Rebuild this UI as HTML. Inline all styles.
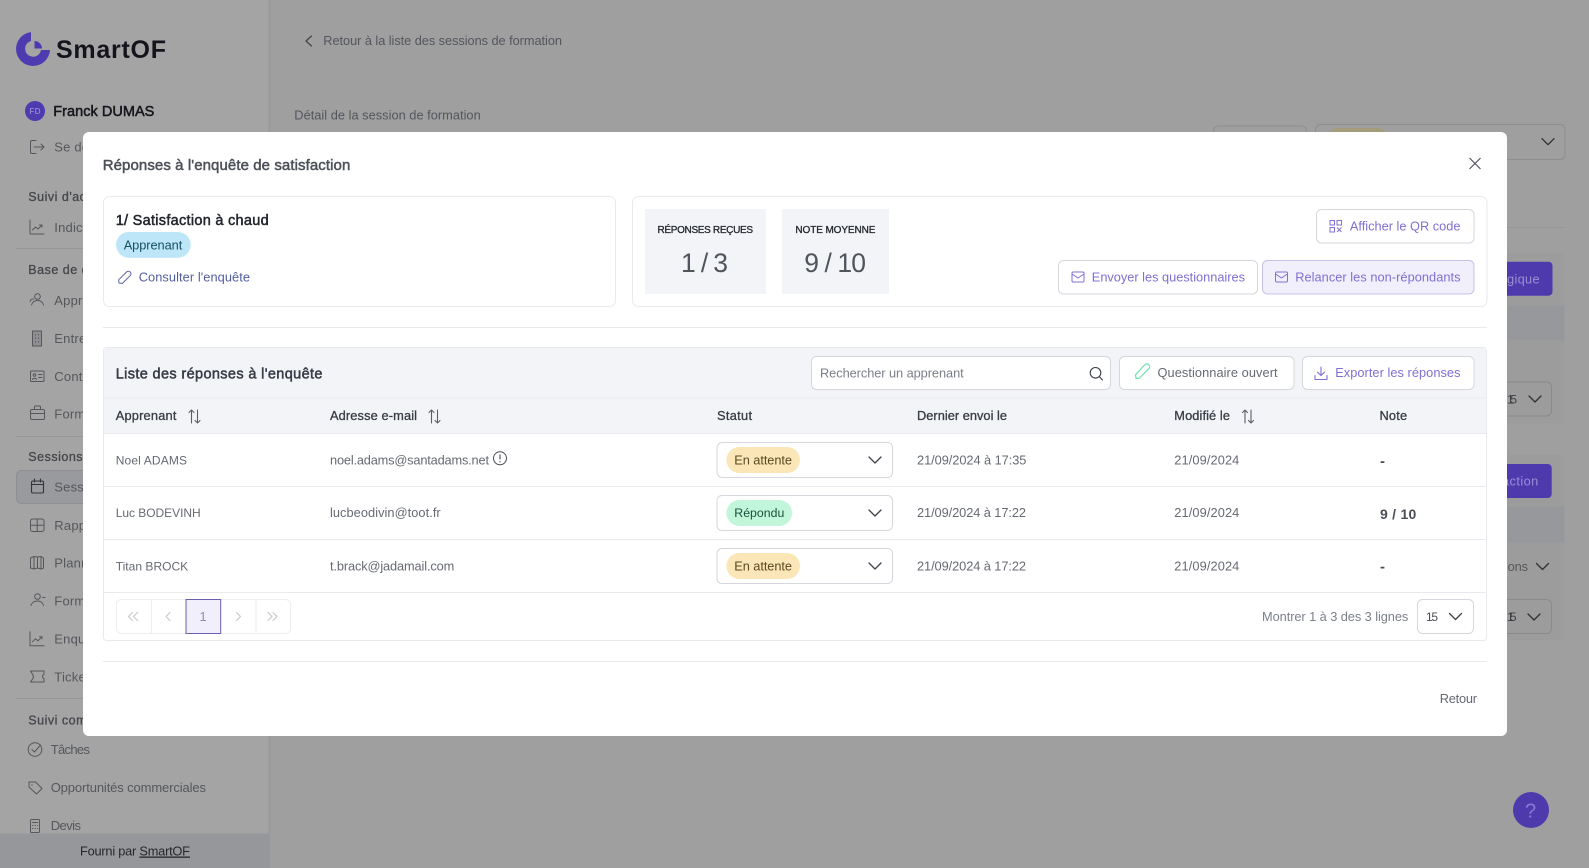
<!DOCTYPE html>
<html lang="fr"><head><meta charset="utf-8"><title>SmartOF</title>
<style>
html,body{margin:0;padding:0;background:#9f9f9f;overflow:hidden}
svg{display:block}
text{font-family:"Liberation Sans",sans-serif;font-size:12.8px;white-space:pre}
.m{stroke-width:.3px;paint-order:stroke}
.s{stroke-width:.5px;paint-order:stroke}
.sb{font-size:13px;letter-spacing:.2px;fill:#55575c}
.sh{font-size:12.5px;letter-spacing:.5px;fill:#45474c;stroke:#45474c;stroke-width:.3px}
.ic{fill:none;stroke:#55575c;stroke-width:1;stroke-linecap:round;stroke-linejoin:round}
.b{fill:#fff;stroke:#d5d7dc;stroke-width:1}
.l{stroke:#e8eaed;stroke-width:1}
.t{fill:#666a73}
.cap{font-size:12px}
.p{fill:#7f70d2}
</style></head><body>
<svg width="1589" height="868" viewBox="0 0 1589 868" xmlns="http://www.w3.org/2000/svg">
<defs>
<path id="chev" d="M-6 -3L0 3L6 -3" fill="none" stroke="#3f4248" stroke-width="1.300" stroke-linecap="round" stroke-linejoin="round"/>
<path id="chevd" d="M-6 -3L0 3L6 -3" fill="none" stroke="#2f3034" stroke-width="1.300" stroke-linecap="round" stroke-linejoin="round"/>
<g id="mail" fill="none" stroke="#7f70d2" stroke-width="1" stroke-linejoin="round"><rect x="0.5" y="0.5" width="12" height="10" rx="1.200"/><path d="M0.5 2.500L6.500 6.500L12.500 2.500"/></g>
<g id="sort" fill="none" stroke="#5b6068" stroke-width="1.100" stroke-linecap="round" stroke-linejoin="round"><path d="M4 14V1M1.500 3.500L4 1L6.500 3.500"/><path d="M10 1V14M7.500 11.500L10 14L12.500 11.500"/></g>
<g id="chart" class="ic"><path d="M30 -7V7H44"/><path d="M32.500 3L35.500 0L38 2L42 -2M39.500 -2H42V0"/></g>
</defs>

<!-- background -->
<rect width="1589" height="868" fill="#9f9f9f"/>
<rect width="269" height="868" fill="#a4a4a4"/>
<rect x="268.500" width="1.500" height="868" fill="#999"/>

<!-- logo -->
<path d="M31 32.100A17 17 0 1 0 50 50L41 50A8 8 0 1 1 31 41Z" fill="#4f3bb0"/>
<path d="M34.500 41A7.500 7.500 0 0 1 42 48.500L34.500 48.500Z" fill="#4f3bb0"/>
<text x="56" y="58" textLength="110" font-weight="700" style="font-size:25px" fill="#14141c">SmartOF</text>

<!-- user -->
<circle cx="35" cy="111" r="10" fill="#4f3bb0"/>
<text x="29.500" y="114" textLength="11" style="font-size:8px" fill="#a79be0">FD</text>
<text x="53.300" y="116" textLength="101" class="s" style="font-size:14.500px" fill="#15151d" stroke="#15151d">Franck DUMAS</text>

<!-- sidebar nav -->
<path class="ic" d="M36 140.500H32A1.500 1.500 0 0 0 30.500 142V152A1.500 1.500 0 0 0 32 153.500H36M34 147H44M41 144L44 147L41 150"/>
<text x="54.300" y="151.500" class="sb">Se déconnecter</text>
<text x="28.300" y="201" class="sh">Suivi d'activité</text>
<use href="#chart" y="227"/>
<text x="54.300" y="232" class="sb">Indicateurs</text>
<line x1="16" x2="260" y1="248.500" y2="248.500" stroke="#979797"/>
<text x="28.300" y="274" class="sh">Base de contacts</text>
<g class="ic"><circle cx="37.500" cy="296.500" r="2.800"/><path d="M31.500 305C32.500 301.500 34.500 300.500 37.500 300.500S42.500 301.500 43.500 305M30 301.500C30.500 299.500 32 299 33.500 299"/></g>
<text x="54.300" y="305" class="sb">Apprenants</text>
<g class="ic"><rect x="32.500" y="331" width="9" height="15" fill="#8f8f8f"/><path d="M35.500 334.500V335M38.500 334.500V335M35.500 338V338.500M38.500 338V338.500M35.500 341.500V342M38.500 341.500V342"/></g>
<text x="54.300" y="343" class="sb">Entreprises</text>
<g class="ic"><rect x="30.500" y="371" width="13.500" height="10.500" rx="1"/><circle cx="34.500" cy="375" r="1.300"/><path d="M32.500 379.500C33 377.800 36 377.800 36.500 379.500M38.500 374.500H42M38.500 377.500H42"/></g>
<text x="54.300" y="381" class="sb">Contacts</text>
<g class="ic"><rect x="30.500" y="409.500" width="14" height="10" rx="1.500"/><path d="M34.500 409.500V407A1 1 0 0 1 35.500 406H39.500A1 1 0 0 1 40.500 407V409.500M30.500 413.500H44.500"/></g>
<text x="54.300" y="418.500" class="sb">Formateurs</text>
<line x1="16" x2="260" y1="436.500" y2="436.500" stroke="#979797"/>
<text x="28.300" y="461" class="sh">Sessions</text>
<rect x="16.500" y="470.500" width="240" height="33" rx="5" fill="#999a9e" stroke="#8d8f93"/>
<g fill="none" stroke="#33353a" stroke-width="1.100" stroke-linecap="round"><rect x="31.500" y="481" width="12" height="12" rx="1.500"/><path d="M31.500 484.500H43.500M34.500 479V482M40.500 479V482"/></g>
<text x="54.300" y="491.500" class="sb">Sessions</text>
<g class="ic"><rect x="30.500" y="519" width="13.500" height="12.500" rx="2"/><path d="M37.250 519V531.500M30.500 525.200H44"/></g>
<text x="54.300" y="530" class="sb">Rapports</text>
<path class="ic" d="M30.500 558L34 556.500L37.500 557L41 556.500L43.500 558V568L41 569L37.500 568L34 569L30.500 568ZM34 556.500V569M37.500 557V568M41 556.500V569"/>
<text x="54.300" y="567.500" class="sb">Planning</text>
<g class="ic"><circle cx="37.500" cy="596.500" r="2.800"/><path d="M31 605.500C32 602 34.500 601 37.500 601S42.500 602 43.500 605.500M42.500 597.500H45"/></g>
<text x="54.300" y="605.500" class="sb">Formateurs</text>
<use href="#chart" y="638.800"/>
<text x="54.300" y="643.500" class="sb">Enquêtes</text>
<path class="ic" d="M30.500 671H44V674.500C42 675 42 678 44 678.500V682H30.500L33 678.500C33.500 677 33.500 676 33 675Z"/>
<text x="54.300" y="681.500" class="sb">Tickets</text>
<line x1="16" x2="260" y1="698.500" y2="698.500" stroke="#979797"/>
<text x="28.300" y="724.500" class="sh">Suivi commercial</text>
<g class="ic"><circle cx="35" cy="749.500" r="6.800"/><path d="M31.800 749.500L34.500 752L40.500 745"/></g>
<text x="50.700" y="754" textLength="39.500" class="sb">Tâches</text>
<path class="ic" d="M29 782H35.500L42 788.500L36.500 794L29 787Z"/>
<circle cx="32" cy="785" r=".7" fill="#55575c"/>
<text x="50.700" y="792" textLength="155.500" class="sb">Opportunités commerciales</text>
<g class="ic"><rect x="30.500" y="819.500" width="9" height="13" rx="1"/><path d="M32.500 822.500H37.500M32.500 825.500H33M35 825.500H35.500M37.500 825.500H37.600M32.500 828.500H33M35 828.500H35.500M37.500 828.500H37.600"/></g>
<text x="50.700" y="830" textLength="30.500" class="sb">Devis</text>
<rect y="833.500" width="270" height="34.500" fill="#95979b"/>
<text x="80" y="855.500" textLength="110" fill="#25262a">Fourni par <tspan text-decoration="underline">SmartOF</tspan></text>

<!-- main behind modal -->
<path d="M311.500 36L306 41L311.500 46" fill="none" stroke="#3f4248" stroke-width="1.200" stroke-linecap="round" stroke-linejoin="round"/>
<text x="323.300" y="45" textLength="238.700" fill="#53565d">Retour à la liste des sessions de formation</text>
<text x="294.300" y="119.500" textLength="186.400" fill="#53565d">Détail de la session de formation</text>
<rect x="1213.500" y="126" width="93" height="20" rx="5" fill="none" stroke="#8c8d90"/>
<rect x="1315.500" y="124.500" width="249.500" height="35" rx="5" fill="none" stroke="#8c8d90"/>
<rect x="1328" y="128" width="59" height="20" rx="10" fill="#a59c7c"/>
<use href="#chevd" x="1548" y="141.700"/>
<line x1="1500" x2="1565" y1="227.500" y2="227.500" stroke="#959597"/>

<rect x="1500" y="253.500" width="64.500" height="170" fill="#9c9c9d"/>
<rect x="1500" y="305.500" width="64.500" height="35" fill="#97989c"/>
<rect x="1500" y="261.700" width="52.500" height="34" rx="4" fill="#4e3aac"/>
<text x="1507" y="283.500" textLength="32.600" fill="#9a8fd6">gique</text>
<rect x="1500.500" y="382" width="51" height="34" rx="5" fill="none" stroke="#88898c"/>
<text x="1507" y="403.500" textLength="10" style="font-size:12px" fill="#3d3f44">15</text>
<use href="#chevd" x="1535" y="399"/>

<rect x="1500" y="455" width="64.500" height="185" fill="#9c9c9d"/>
<rect x="1500" y="506.700" width="64.500" height="36" fill="#97989c"/>
<rect x="1500" y="464" width="51.700" height="34" rx="4" fill="#4e3aac"/>
<text x="1502" y="485.500" textLength="36.300" fill="#9a8fd6">action</text>
<text x="1505" y="571" textLength="23" fill="#55575c">ions</text>
<use href="#chevd" x="1542.500" y="566.500"/>
<rect x="1500.500" y="599.500" width="51" height="34" rx="5" fill="none" stroke="#88898c"/>
<text x="1507" y="621" textLength="9.500" style="font-size:12px" fill="#3d3f44">15</text>
<use href="#chevd" x="1534" y="617"/>

<circle cx="1531" cy="810" r="18" fill="#4e3aac"/>
<text x="1525" y="817.500" textLength="11" style="font-size:20px" fill="#8a7bd4">?</text>

<!-- modal -->
<rect x="83" y="132" width="1424" height="604" rx="6" fill="#fff"/>
<text x="102.700" y="170" textLength="247.600" class="s" style="font-size:15px" fill="#4b5058" stroke="#4b5058">Réponses à l'enquête de satisfaction</text>
<path d="M1469.800 158.300L1480.200 168.700M1480.200 158.300L1469.800 168.700" stroke="#55585f" stroke-width="1.100" fill="none" stroke-linecap="round"/>

<!-- card 1 -->
<rect x="103.500" y="196.500" width="512" height="110" rx="6" fill="#fff" stroke="#e8eaed"/>
<text x="115.700" y="225" textLength="153" class="s" style="font-size:14.500px" fill="#23262d" stroke="#23262d">1/ Satisfaction à chaud</text>
<rect x="116" y="232" width="74.700" height="25.700" rx="12.800" fill="#bde7f9"/>
<text x="123.700" y="249.500" textLength="58.600" fill="#14505f">Apprenant</text>
<path d="M119 283L118.700 279.800L126.500 272A2 2 0 0 1 130.200 275.700L122.300 283.500Z" fill="none" stroke="#5c67a5" stroke-width="1" stroke-linejoin="round"/>
<text x="138.700" y="281.300" textLength="111.300" fill="#535e9e">Consulter l'enquête</text>

<!-- card 2 -->
<rect x="632.500" y="196.500" width="854.500" height="110" rx="6" fill="#fff" stroke="#e8eaed"/>
<rect x="645" y="209" width="121" height="85" fill="#f2f4f7"/>
<rect x="782" y="209" width="107" height="85" fill="#f2f4f7"/>
<text x="657.500" y="233" textLength="95.500" class="m" style="font-size:10px" fill="#23262d" stroke="#23262d">RÉPONSES REÇUES</text>
<text x="795.400" y="233" textLength="80" class="m" style="font-size:10px" fill="#23262d" stroke="#23262d">NOTE MOYENNE</text>
<text x="681" y="272" textLength="47" style="font-size:26.500px" fill="#50545c">1 / 3</text>
<text x="804.300" y="272" textLength="61.700" style="font-size:26.500px" fill="#50545c">9 / 10</text>

<rect class="b" x="1316.500" y="209.500" width="157.500" height="33.500" rx="5"/>
<g fill="none" stroke="#7f70d2" stroke-width="1"><rect x="1330" y="220.500" width="4.500" height="4.500"/><rect x="1337" y="220.500" width="4.500" height="4.500"/><rect x="1330" y="227.500" width="4.500" height="4.500"/><path d="M1337 227.500L1341.500 232M1341.500 227.500L1337 232"/></g>
<text x="1349.900" y="230.500" textLength="110.600" class="p">Afficher le QR code</text>

<rect class="b" x="1058.500" y="260.500" width="199" height="33.500" rx="5"/>
<use href="#mail" x="1071.500" y="271.500"/>
<text x="1091.800" y="281.300" textLength="153.200" class="p">Envoyer les questionnaires</text>

<rect x="1262.500" y="260.500" width="211.500" height="33.500" rx="5" fill="#f1effc" stroke="#c6c1e6"/>
<use href="#mail" x="1275" y="271.500"/>
<text x="1295.200" y="281.300" textLength="165.300" class="p">Relancer les non-répondants</text>

<line class="l" x1="103" x2="1487" y1="327.500" y2="327.500"/>

<!-- table -->
<rect x="103.500" y="347.500" width="1383" height="293" rx="3" fill="#fff" stroke="#e8eaed"/>
<rect x="104" y="348" width="1382" height="86" fill="#f2f4f7"/>
<line x1="104" x2="1486" y1="398" y2="398" stroke="#e9ebef"/>
<text x="115.700" y="378.500" textLength="206.800" class="s" style="font-size:14.500px" fill="#373b45" stroke="#373b45">Liste des réponses à l'enquête</text>

<rect class="b" x="811.500" y="356.500" width="299" height="33" rx="5"/>
<text x="820" y="377.300" textLength="143.700" fill="#7b7f88">Rechercher un apprenant</text>
<g fill="none" stroke="#3c3f46" stroke-width="1.100" stroke-linecap="round"><circle cx="1095.500" cy="372.800" r="5.300"/><path d="M1099.500 376.800L1102.500 380"/></g>

<rect class="b" x="1119.500" y="356.500" width="174.500" height="33" rx="5"/>
<path d="M1136 378.500L1135.500 374.800L1144.500 365A2.200 2.200 0 0 1 1149 368.500L1139.500 378Z" fill="none" stroke="#6fe3b0" stroke-width="1.200" stroke-linejoin="round"/>
<text x="1157.500" y="377.200" textLength="120.100" fill="#666a73">Questionnaire ouvert</text>

<rect class="b" x="1302.500" y="356.500" width="171.500" height="33" rx="5"/>
<g fill="none" stroke="#7f70d2" stroke-width="1.100" stroke-linecap="round" stroke-linejoin="round"><path d="M1321 367V375.500M1317.500 372.200L1321 375.500L1324.500 372.200M1315 375.500V379.500H1327V375.500"/></g>
<text x="1335.200" y="377.200" textLength="125.300" class="p">Exporter les réponses</text>

<g class="m" style="font-size:12px" fill="#373b45" stroke="#373b45">
<text x="115.700" y="420" textLength="60.700">Apprenant</text>
<text x="330" y="420" textLength="87">Adresse e-mail</text>
<text x="717" y="420" textLength="35">Statut</text>
<text x="917" y="420" textLength="90">Dernier envoi le</text>
<text x="1174.300" y="420" textLength="55.700">Modifié le</text>
<text x="1379.500" y="420" textLength="27.600">Note</text>
</g>
<use href="#sort" x="187.500" y="409"/>
<use href="#sort" x="427.500" y="409"/>
<use href="#sort" x="1241" y="409"/>

<line class="l" x1="104" x2="1486" y1="433.500" y2="433.500"/>
<line class="l" x1="104" x2="1486" y1="486.500" y2="486.500"/>
<line class="l" x1="104" x2="1486" y1="539.500" y2="539.500"/>
<line class="l" x1="104" x2="1486" y1="592.500" y2="592.500"/>

<!-- row 1 -->
<text x="115.700" y="464.500" textLength="71.300" class="t cap">Noel ADAMS</text>
<text x="330" y="464.500" textLength="159" class="t">noel.adams@santadams.net</text>
<circle cx="500" cy="458.300" r="6.500" fill="none" stroke="#4b4e55" stroke-width="1"/>
<path d="M500 454.800V459M500 461.300V461.900" stroke="#4b4e55" stroke-width="1.100" stroke-linecap="round"/>
<rect class="b" x="717" y="442.500" width="175.500" height="35" rx="5"/>
<rect x="726.400" y="447" width="73.600" height="26" rx="13" fill="#fbe6b7"/>
<text x="734.300" y="464.500" textLength="57.700" fill="#5a4a20">En attente</text>
<use href="#chev" x="875" y="460"/>
<text x="917" y="464.500" textLength="109.400" class="t">21/09/2024 à 17:35</text>
<text x="1174.300" y="464.500" textLength="65" class="t">21/09/2024</text>
<text x="1380" y="466" textLength="5.500" font-weight="700" style="font-size:15px" fill="#4b4e55">-</text>

<!-- row 2 -->
<text x="115.700" y="517.200" textLength="85" class="t cap">Luc BODEVINH</text>
<text x="330" y="517.200" textLength="110.700" class="t">lucbeodivin@toot.fr</text>
<rect class="b" x="717" y="495.500" width="175.500" height="35" rx="5"/>
<rect x="726.400" y="500" width="65.600" height="26" rx="13" fill="#c2f6da"/>
<text x="734.300" y="517.200" textLength="50" style="font-size:12.300px" fill="#17503a">Répondu</text>
<use href="#chev" x="875" y="513"/>
<text x="917" y="517.200" textLength="109" class="t">21/09/2024 à 17:22</text>
<text x="1174.300" y="517.200" textLength="65" class="t">21/09/2024</text>
<text x="1380" y="519" textLength="36.300" class="s" style="font-size:14px" font-weight="700" fill="#4b4e55">9 / 10</text>

<!-- row 3 -->
<text x="115.700" y="570.500" textLength="72.500" class="t cap">Titan BROCK</text>
<text x="330" y="570.500" textLength="124.300" class="t">t.brack@jadamail.com</text>
<rect class="b" x="717" y="548.500" width="175.500" height="35" rx="5"/>
<rect x="726.400" y="553" width="73.600" height="26" rx="13" fill="#fbe6b7"/>
<text x="734.300" y="570.500" textLength="57.700" fill="#5a4a20">En attente</text>
<use href="#chev" x="875" y="566"/>
<text x="917" y="570.500" textLength="109" class="t">21/09/2024 à 17:22</text>
<text x="1174.300" y="570.500" textLength="65" class="t">21/09/2024</text>
<text x="1380" y="571.500" textLength="5.500" font-weight="700" style="font-size:15px" fill="#4b4e55">-</text>

<!-- pagination -->
<rect x="116.500" y="599.500" width="174" height="34" rx="5" fill="#fff" stroke="#eceef0"/>
<path d="M151.500 599.500V633.500M186 599.500V633.500M256 599.500V633.500" stroke="#eceef0"/>
<rect x="186" y="599.500" width="34.700" height="34" fill="#f1effc" stroke="#6a5fb0"/>
<text x="199.500" y="621" fill="#8f8ac0">1</text>
<g fill="none" stroke="#c5c7ce" stroke-width="1.100" stroke-linecap="round" stroke-linejoin="round">
<path d="M132.500 612.500L128.500 616.500L132.500 620.500M137.500 612.500L133.500 616.500L137.500 620.500"/>
<path d="M170 612.500L166 616.500L170 620.500"/>
<path d="M236.500 612.500L240.500 616.500L236.500 620.500"/>
<path d="M268 612.500L272 616.500L268 620.500M273 612.500L277 616.500L273 620.500"/>
</g>
<text x="1262" y="621" textLength="146.300" fill="#7b808a">Montrer 1 à 3 des 3 lignes</text>
<rect class="b" x="1417.500" y="599.500" width="56" height="34" rx="5"/>
<text x="1426" y="621" textLength="12" style="font-size:12px" fill="#4b4e55">15</text>
<use href="#chev" x="1455.500" y="616.500"/>

<line class="l" x1="103" x2="1487" y1="661.500" y2="661.500"/>
<text x="1439.700" y="703" textLength="37.300" fill="#666a73">Retour</text>
</svg>
</body></html>
